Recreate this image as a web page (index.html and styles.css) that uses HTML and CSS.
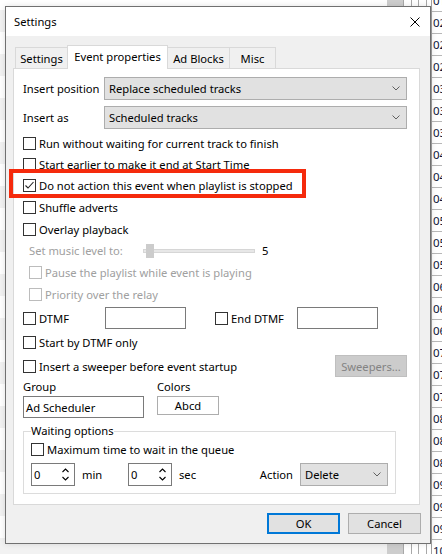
FILE: index.html
```html
<!DOCTYPE html>
<html>
<head>
<meta charset="utf-8">
<link rel="stylesheet" href="styles.css">
</head>
<body>
<div class="desktop">
  <div class="bg-list">
    <div class="band first"></div><div class="band"></div><div class="band"></div><div class="band"></div><div class="band"></div><div class="band"></div><div class="band"></div><div class="band"></div><div class="band"></div><div class="band"></div><div class="band"></div><div class="band"></div><div class="band"></div><div class="band"></div><div class="band"></div><div class="band"></div><div class="band"></div><div class="band"></div><div class="band"></div><div class="band"></div><div class="band"></div><div class="band"></div><div class="band"></div><div class="band"></div><div class="band"></div><div class="band"></div>
  </div>
  <div class="bg-scroll">
    <div class="sb-thumb"></div><div class="sb-line"></div><div class="sb-gap w7"></div><div class="sb-line"></div><div class="sb-gap w6"></div><div class="sb-line"></div><div class="sb-gap w7"></div><div class="sb-line"></div><div class="sb-gap w4"></div>
  </div>
  <div class="bg-table">
    <div class="cell">01</div><div class="cell">02</div><div class="cell">02</div><div class="cell">02</div><div class="cell">03</div><div class="cell">03</div><div class="cell">03</div><div class="cell">04</div><div class="cell">04</div><div class="cell">04</div><div class="cell">05</div><div class="cell">05</div><div class="cell">05</div><div class="cell">06</div><div class="cell">06</div><div class="cell">06</div><div class="cell">07</div><div class="cell">07</div><div class="cell">07</div><div class="cell">08</div><div class="cell">08</div><div class="cell">08</div><div class="cell">09</div><div class="cell">09</div><div class="cell">09</div><div class="cell">10</div>
  </div>

  <div class="dialog">
    <div class="titlebar">
      <span class="title">Settings</span>
      <svg class="close" width="10" height="10" viewBox="0 0 10 10"><path d="M0.5 0.5L9.5 9.5M9.5 0.5L0.5 9.5" stroke="#000" stroke-width="1" fill="none"/></svg>
    </div>
    <div class="tabs">
      <div class="tab t1">Settings</div>
      <div class="tab t2 active">Event properties</div>
      <div class="tab t3">Ad Blocks</div>
      <div class="tab t4">Misc</div>
    </div>
    <div class="panel">
      <div class="field-row">
        <span class="field-label">Insert position</span>
        <div class="select wide"><span>Replace scheduled tracks</span><svg class="chev" width="8" height="5" viewBox="0 0 8 5"><path d="M0.5 0.5L4 4L7.5 0.5" stroke="#606060" fill="none"/></svg></div>
      </div>
      <div class="field-row second">
        <span class="field-label">Insert as</span>
        <div class="select wide"><span>Scheduled tracks</span><svg class="chev" width="8" height="5" viewBox="0 0 8 5"><path d="M0.5 0.5L4 4L7.5 0.5" stroke="#606060" fill="none"/></svg></div>
      </div>

      <div class="chk-row r21 first-chk"><span class="box"></span><span class="lbl">Run without waiting for current track to finish</span></div>
      <div class="chk-row r21"><span class="box"></span><span class="lbl">Start earlier to make it end at Start Time</span></div>
      <div class="chk-row r21"><span class="box"><svg width="11" height="11" viewBox="0 0 11 11"><path d="M1.5 5.5L4 8L9.5 2" stroke="#222" stroke-width="1.1" fill="none"/></svg></span><span class="lbl">Do not action this event when playlist is stopped</span></div>
      <div class="chk-row r22"><span class="box"></span><span class="lbl">Shuffle adverts</span></div>
      <div class="chk-row r22"><span class="box"></span><span class="lbl">Overlay playback</span></div>

      <div class="slider-row">
        <span class="slider-label">Set music level to:</span>
        <div class="track"><span class="thumb"></span></div>
        <span class="slider-val">5</span>
      </div>

      <div class="chk-row r22 indent disabled"><span class="box"></span><span class="lbl">Pause the playlist while event is playing</span></div>
      <div class="chk-row r22 indent disabled"><span class="box"></span><span class="lbl">Priority over the relay</span></div>

      <div class="dtmf-row">
        <div class="dtmf-cell"><span class="box"></span><span class="lbl">DTMF</span></div>
        <div class="textbox dtmf-input"></div>
        <div class="dtmf-cell end"><span class="box"></span><span class="lbl">End DTMF</span></div>
        <div class="textbox dtmf-input"></div>
      </div>

      <div class="chk-row r23"><span class="box"></span><span class="lbl">Start by DTMF only</span></div>
      <div class="chk-row r24">
        <span class="box"></span><span class="lbl">Insert a sweeper before event startup</span>
        <div class="btn-disabled">Sweepers...</div>
      </div>

      <div class="group-labels">
        <span class="col1">Group</span><span>Colors</span>
      </div>
      <div class="group-inputs">
        <div class="textbox group-input">Ad Scheduler</div>
        <div class="colors-box">Abcd</div>
      </div>

      <fieldset class="waiting">
        <legend>Waiting options</legend>
        <div class="chk-row r20"><span class="box"></span><span class="lbl">Maximum time to wait in the queue</span></div>
        <div class="spin-row">
          <div class="spin"><span>0</span><svg width="7" height="13" viewBox="0 0 7 13"><path d="M0.5 4L3.5 1L6.5 4M0.5 9L3.5 12L6.5 9" stroke="#000" stroke-width="1.1" fill="none"/></svg></div>
          <span class="unit">min</span>
          <div class="spin"><span>0</span><svg width="7" height="13" viewBox="0 0 7 13"><path d="M0.5 4L3.5 1L6.5 4M0.5 9L3.5 12L6.5 9" stroke="#000" stroke-width="1.1" fill="none"/></svg></div>
          <span class="unit">sec</span>
          <span class="action-label">Action</span>
          <div class="select action"><span>Delete</span><svg class="chev" width="8" height="5" viewBox="0 0 8 5"><path d="M0.5 0.5L4 4L7.5 0.5" stroke="#606060" fill="none"/></svg></div>
        </div>
      </fieldset>
    </div>
    <div class="footer">
      <div class="btn default">OK</div>
      <div class="btn">Cancel</div>
    </div>
    <div class="highlight"></div>
  </div>
</div>
</body>
</html>
```

FILE: styles.css
```css
* { box-sizing: border-box; }
body {
  margin: 0;
  width: 442px;
  height: 554px;
  overflow: hidden;
  font-family: "Noto Sans", "Open Sans", sans-serif;
  font-size: 11.2px;
  color: #000;
  background: #fff;
}
.desktop {
  position: relative;
  display: flex;
  width: 442px;
  height: 554px;
  overflow: hidden;
  background: #fff;
}
.bg-list {
  width: 387px;
  flex: none;
  display: flex;
  flex-direction: column;
}
.band { height: 22px; flex: none; background: #fff; }
.band.first { height: 10px; }
.band:nth-child(even) { background: #f2f2f2; }

.bg-scroll {
  width: 44px;
  flex: none;
  display: flex;
  background: #fff;
}
.sb-thumb { width: 16px; background: #cdcdcd; }
.sb-line { width: 1px; background: #a8a8a8; }
.sb-gap.w7 { width: 7px; }
.sb-gap.w6 { width: 6px; }
.sb-gap.w4 { width: 4px; }

.bg-table {
  flex: 1;
  border-left: 1px solid #a0a0a0;
  margin-top: -10px;
  display: flex;
  flex-direction: column;
  overflow: hidden;
}
.cell {
  height: 22px;
  flex: none;
  border-bottom: 1px solid #b8b8b8;
  padding-left: 1px;
  line-height: 21px;
  white-space: nowrap;
  color: #0c1538;
  font-size: 11.5px;
}

/* dialog */
.dialog {
  position: absolute;
  left: 5px;
  top: 6px;
  width: 426px;
  height: 538px;
  border: 1px solid #707070;
  background: #f0f0f0;
  display: flex;
  flex-direction: column;
  box-shadow: 0 0 6px rgba(0,0,0,0.12);
}
.titlebar {
  height: 29px;
  flex: none;
  background: #fff;
  display: flex;
  align-items: center;
  justify-content: space-between;
  padding-left: 8px;
}
.close { margin-right: 10px; }

.tabs {
  display: flex;
  align-items: flex-end;
  height: 24px;
  margin: 9px 0 -1px 9px;
  position: relative;
  z-index: 1;
}
.tab {
  height: 21px;
  margin-bottom: 1px;
  border: 1px solid #d9d9d9;
  border-bottom: none;
  background: #f0f0f0;
  display: flex;
  align-items: center;
  justify-content: center;
}
.tab + .tab { margin-left: -1px; }
.t1 { width: 53px; }
.t2 { width: 101px; }
.t3 { width: 63px; }
.t4 { width: 47px; }
.tab.active {
  height: 24px;
  margin-bottom: 0;
  background: #fff;
  position: relative;
  z-index: 2;
  padding-bottom: 2px;
}

.panel {
  height: 437px;
  flex: none;
  margin: 0 10px 0 7px;
  border: 1px solid #d9d9d9;
  background: #fff;
  padding: 8px 12px 0 9px;
}

.field-row {
  display: flex;
  align-items: center;
  height: 23px;
}
.field-row.second { margin-top: 6px; }
.field-label { width: 81px; flex: none; }
.select {
  height: 23px;
  background: #e1e1e1;
  border: 1px solid #adadad;
  display: flex;
  align-items: center;
  justify-content: space-between;
  padding: 0 6px 0 4px;
}
.select.wide { flex: 1; }
.chev { flex: none; }

.chk-row {
  display: flex;
  align-items: center;
}
.r20 { height: 20px; }
.r21 { height: 21px; }
.r22 { height: 22px; }
.r23 { height: 23px; }
.r24 { height: 24px; }
.first-chk { margin-top: 4px; }
.box {
  width: 13px;
  height: 13px;
  flex: none;
  border: 1px solid #333;
  background: #fff;
  display: flex;
}
.lbl { margin-left: 3px; white-space: nowrap; }
.indent { padding-left: 6px; }
.disabled .box { border-color: #bcbcbc; }
.disabled .lbl { color: #a0a0a0; }

.slider-row {
  display: flex;
  align-items: center;
  height: 21px;
  padding-left: 6px;
}
.slider-label { width: 114px; flex: none; color: #a0a0a0; }
.track {
  width: 112px;
  height: 4px;
  background: #e7e7e7;
  border: 1px solid #d6d6d6;
  position: relative;
}
.thumb {
  position: absolute;
  left: 2px;
  top: -6px;
  width: 8px;
  height: 14px;
  background: #cccccc;
}
.slider-val { margin-left: 7px; }

.dtmf-row {
  display: flex;
  align-items: center;
  height: 26px;
}
.dtmf-cell {
  width: 82px;
  flex: none;
  display: flex;
  align-items: center;
}
.dtmf-cell.end { margin-left: 29px; }
.textbox {
  height: 22px;
  border: 1px solid #7a7a7a;
  background: #fff;
}
.dtmf-input { width: 81px; flex: none; }

.btn-disabled {
  margin-left: auto;
  width: 72px;
  height: 22px;
  background: #cccccc;
  border: 1px solid #bfbfbf;
  color: #838383;
  display: flex;
  align-items: center;
  justify-content: center;
}

.group-labels {
  display: flex;
  align-items: center;
  height: 17px;
}
.col1 { width: 134px; flex: none; }
.group-inputs {
  display: flex;
  align-items: flex-start;
  margin-top: 1px;
}
.group-input {
  width: 121px;
  margin-right: 13px;
  display: flex;
  align-items: center;
  padding-left: 2px;
}
.colors-box {
  width: 62px;
  height: 19px;
  border: 1px solid #adadad;
  background: #fff;
  display: flex;
  align-items: center;
  justify-content: center;
}

.waiting {
  margin: 5px 0 0 0;
  width: 373px;
  border: 1px solid #dcdcdc;
  padding: 0 7px 7px 7px;
  min-width: 0;
}
.waiting legend {
  padding: 0;
  line-height: 16px;
  height: 16px;
}
.spin-row {
  display: flex;
  align-items: center;
  height: 23px;
  margin-top: 4px;
}
.spin {
  width: 44px;
  height: 23px;
  flex: none;
  border: 1px solid #7a7a7a;
  background: #fff;
  display: flex;
  align-items: center;
  justify-content: space-between;
  padding: 0 5px 0 2px;
}
.unit { width: 53px; flex: none; padding-left: 7px; }
.action-label { margin-left: auto; margin-right: 7px; }
.select.action { width: 88px; flex: none; }

.footer {
  display: flex;
  justify-content: flex-end;
  gap: 8px;
  padding: 8px 9px 0 0;
}
.btn {
  width: 73px;
  height: 21px;
  background: #e1e1e1;
  border: 1px solid #adadad;
  display: flex;
  align-items: center;
  justify-content: center;
}
.btn.default { border: 2px solid #0078d7; }

.highlight {
  position: absolute;
  left: 3px;
  top: 162px;
  width: 297px;
  height: 29px;
  border: 4px solid #f52a0c;
  pointer-events: none;
}
```
